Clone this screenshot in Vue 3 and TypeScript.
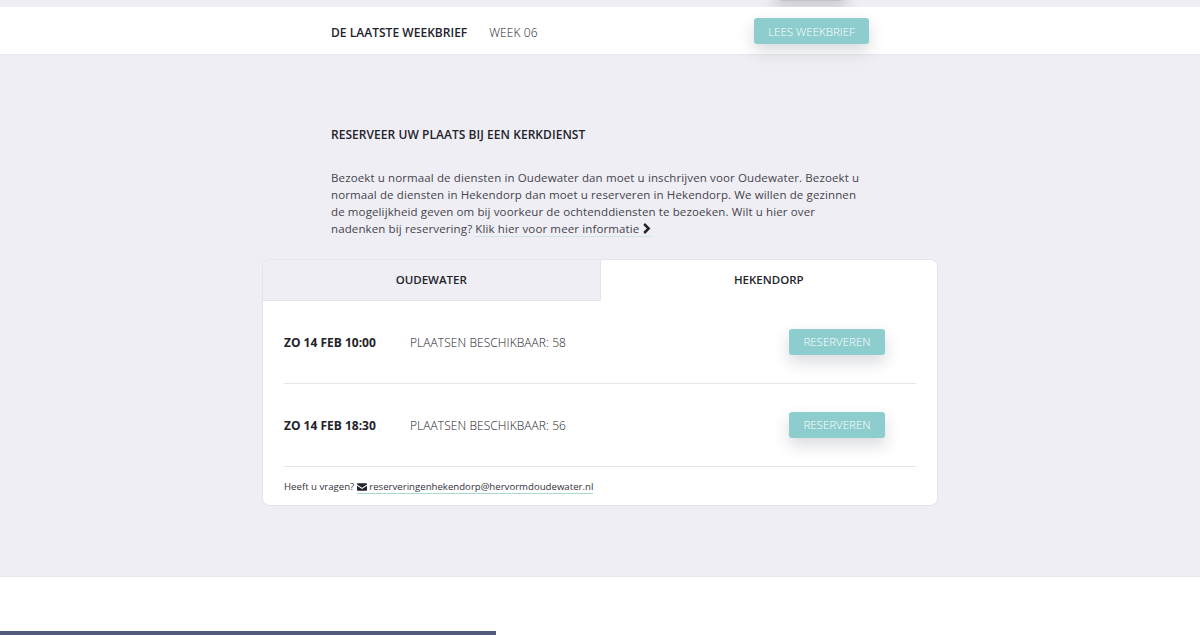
<template>
  <div class="page">
    <div class="top-strip">
      <div class="top-strip-inner"><span class="strip-shadow" /></div>
    </div>

    <!-- weekbrief -->
    <section class="weekbrief">
      <div class="weekbrief-inner">
        <strong class="weekbrief-title">DE LAATSTE WEEKBRIEF</strong>
        <span class="weekbrief-week">WEEK 06</span>
        <button class="btn btn-week">LEES WEEKBRIEF</button>
      </div>
    </section>

    <main class="content">
      <div class="intro">
        <h2 class="intro-title">RESERVEER UW PLAATS BIJ EEN KERKDIENST</h2>
        <p class="intro-text">
          Bezoekt u normaal de diensten in Oudewater dan moet u inschrijven voor Oudewater. Bezoekt u<br />
          normaal de diensten in Hekendorp dan moet u reserveren in Hekendorp. We willen de gezinnen<br />
          de mogelijkheid geven om bij voorkeur de ochtenddiensten te bezoeken. Wilt u hier over<br />
          nadenken bij reservering?
          <a class="more-link">Klik hier voor meer informatie<svg class="chevron" viewBox="0 0 10 12" width="9" height="11">
              <path d="M2.4 1 L7.4 6 L2.4 11" fill="none" stroke="#23232b" stroke-width="2.8" />
            </svg></a>
        </p>
      </div>

      <div class="card">
        <div class="tabs">
          <div v-for="tab in tabs" :key="tab" class="tab" :class="{ active: tab === activeTab }">
            {{ tab }}
          </div>
        </div>

        <div class="rows">
          <div v-for="row in services" :key="row.date" class="row">
            <strong class="row-date">{{ row.date }}</strong>
            <span class="row-places">PLAATSEN BESCHIKBAAR: {{ row.places }}</span>
            <button class="btn btn-reserve">RESERVEREN</button>
          </div>
        </div>

        <p class="questions">
          Heeft u vragen?
          <a class="mail-link">
            <svg class="mail-icon" viewBox="0 0 12 9" width="10" height="8">
              <path d="M0 1.2C0 .5.5 0 1.2 0h9.6c.7 0 1.2.5 1.2 1.2v.3L6 5.4 0 1.5z" fill="#23232b" />
              <path d="M0 2.9V7.8C0 8.5.5 9 1.2 9h9.6c.7 0 1.2-.5 1.2-1.2V2.9L6 6.8z" fill="#23232b" />
            </svg>
            reserveringenhekendorp@hervormdoudewater.nl
          </a>
        </p>
      </div>
    </main>

    <footer class="bottom">
      <div class="progress" />
    </footer>
  </div>
</template>

<script setup lang="ts">
interface Service {
  date: string
  places: number
}

const tabs: string[] = ['OUDEWATER', 'HEKENDORP']
const activeTab = 'HEKENDORP'

const services: Service[] = [
  { date: 'ZO 14 FEB 10:00', places: 58 },
  { date: 'ZO 14 FEB 18:30', places: 56 },
]
</script>

<style>
html,
body {
  margin: 0;
  background: #fff;
}
</style>

<style scoped>
.page {
  height: 635px;
  overflow: hidden;
  display: flex;
  flex-direction: column;
  font-family: "Open Sans", "Liberation Sans", sans-serif;
  color: #23232b;
  background: #efeef4;
}

.top-strip {
  height: 7px;
  overflow: hidden;
}

.top-strip-inner {
  width: 538px;
  margin-left: 331px;
  display: flex;
  justify-content: flex-end;
}

.strip-shadow {
  width: 60px;
  height: 1px;
  margin-right: 28px;
  background: #c4c3ca;
  box-shadow: 0 0 14px 6px #c4c3ca;
}

/* weekbrief */
.weekbrief {
  height: 47px;
  background: #fff;
  box-shadow: 0 1px 1px rgba(50, 50, 70, 0.03);
}

.weekbrief-inner {
  width: 538px;
  height: 100%;
  margin-left: 331px;
  display: flex;
  align-items: center;
}

.weekbrief-title {
  font-size: 12px;
  font-weight: 600;
  letter-spacing: 0.03px;
  padding-top: 4px;
}

.weekbrief-week {
  margin-left: 22px;
  font-size: 12px;
  font-weight: 300;
  letter-spacing: 0.1px;
  padding-top: 4px;
}

.btn {
  border: none;
  border-radius: 3px;
  background: #8dcdcd;
  color: #fff;
  font-family: inherit;
  font-size: 11.5px;
  font-weight: 300;
  padding: 0;
  box-shadow: 0 7px 16px rgba(60, 70, 90, 0.2);
}

.btn-week {
  width: 115px;
  height: 26px;
  margin-left: auto;
  margin-top: 1px;
}

/* inhoud */
.content {
  flex: 1;
  display: flex;
  flex-direction: column;
}

.intro {
  width: 538px;
  margin-left: 331px;
  padding-top: 72px;
}

.intro-title {
  margin: 0;
  font-size: 12px;
  line-height: 18px;
  font-weight: 600;
  letter-spacing: 0.05px;
}

.intro-text {
  margin: 24.6px 0 0;
  height: 70.4px;
  font-size: 11.5px;
  line-height: 17.3px;
  letter-spacing: 0.12px;
  font-weight: 400;
  color: #44444c;
  white-space: nowrap;
}

.more-link {
  border-bottom: 1px solid #cfe6e4;
}

.chevron {
  vertical-align: -1px;
  margin-left: 3px;
}

/* kaart met tabs */
.card {
  width: 676px;
  height: 247px;
  box-sizing: border-box;
  margin: 20px 0 0 262px;
  background: #fff;
  border: 1px solid #e4e4ea;
  border-radius: 8px;
  overflow: hidden;
  display: flex;
  flex-direction: column;
}

.tabs {
  display: flex;
  height: 41px;
  flex: none;
}

.tab {
  flex: 1;
  display: flex;
  align-items: center;
  justify-content: center;
  padding-top: 1px;
  padding-bottom: 2px;
  font-size: 11.5px;
  font-weight: 600;
  background: #efeef4;
  border-bottom: 1px solid #e4e4ea;
}

.tab.active {
  background: #fff;
  border-bottom-color: transparent;
  border-left: 1px solid #e4e4ea;
}

.rows {
  margin: 0 21px;
}

.row {
  height: 83px;
  display: flex;
  align-items: center;
  border-bottom: 1px solid #e6e6ea;
  box-sizing: border-box;
  padding-right: 31px;
}

.row-date {
  width: 126px;
  font-size: 12px;
  font-weight: 700;
  padding-top: 1px;
}

.row-places {
  font-size: 12px;
  font-weight: 300;
  letter-spacing: 0.07px;
  padding-top: 1px;
}

.btn-reserve {
  width: 96px;
  height: 26px;
  margin-left: auto;
}

.questions {
  margin: 12px 0 0 21px;
  font-size: 9.65px;
  line-height: 16px;
  color: #33333b;
}

.mail-link {
  border-bottom: 1px solid #a9dccf;
}

.mail-icon {
  vertical-align: -1px;
}

/* onderkant */
.bottom {
  height: 58px;
  background: #fff;
  box-shadow: 0 -1px 1px rgba(50, 50, 70, 0.03);
  display: flex;
  align-items: flex-end;
}

.progress {
  width: 496px;
  height: 4px;
  background: #525a7d;
}
</style>
